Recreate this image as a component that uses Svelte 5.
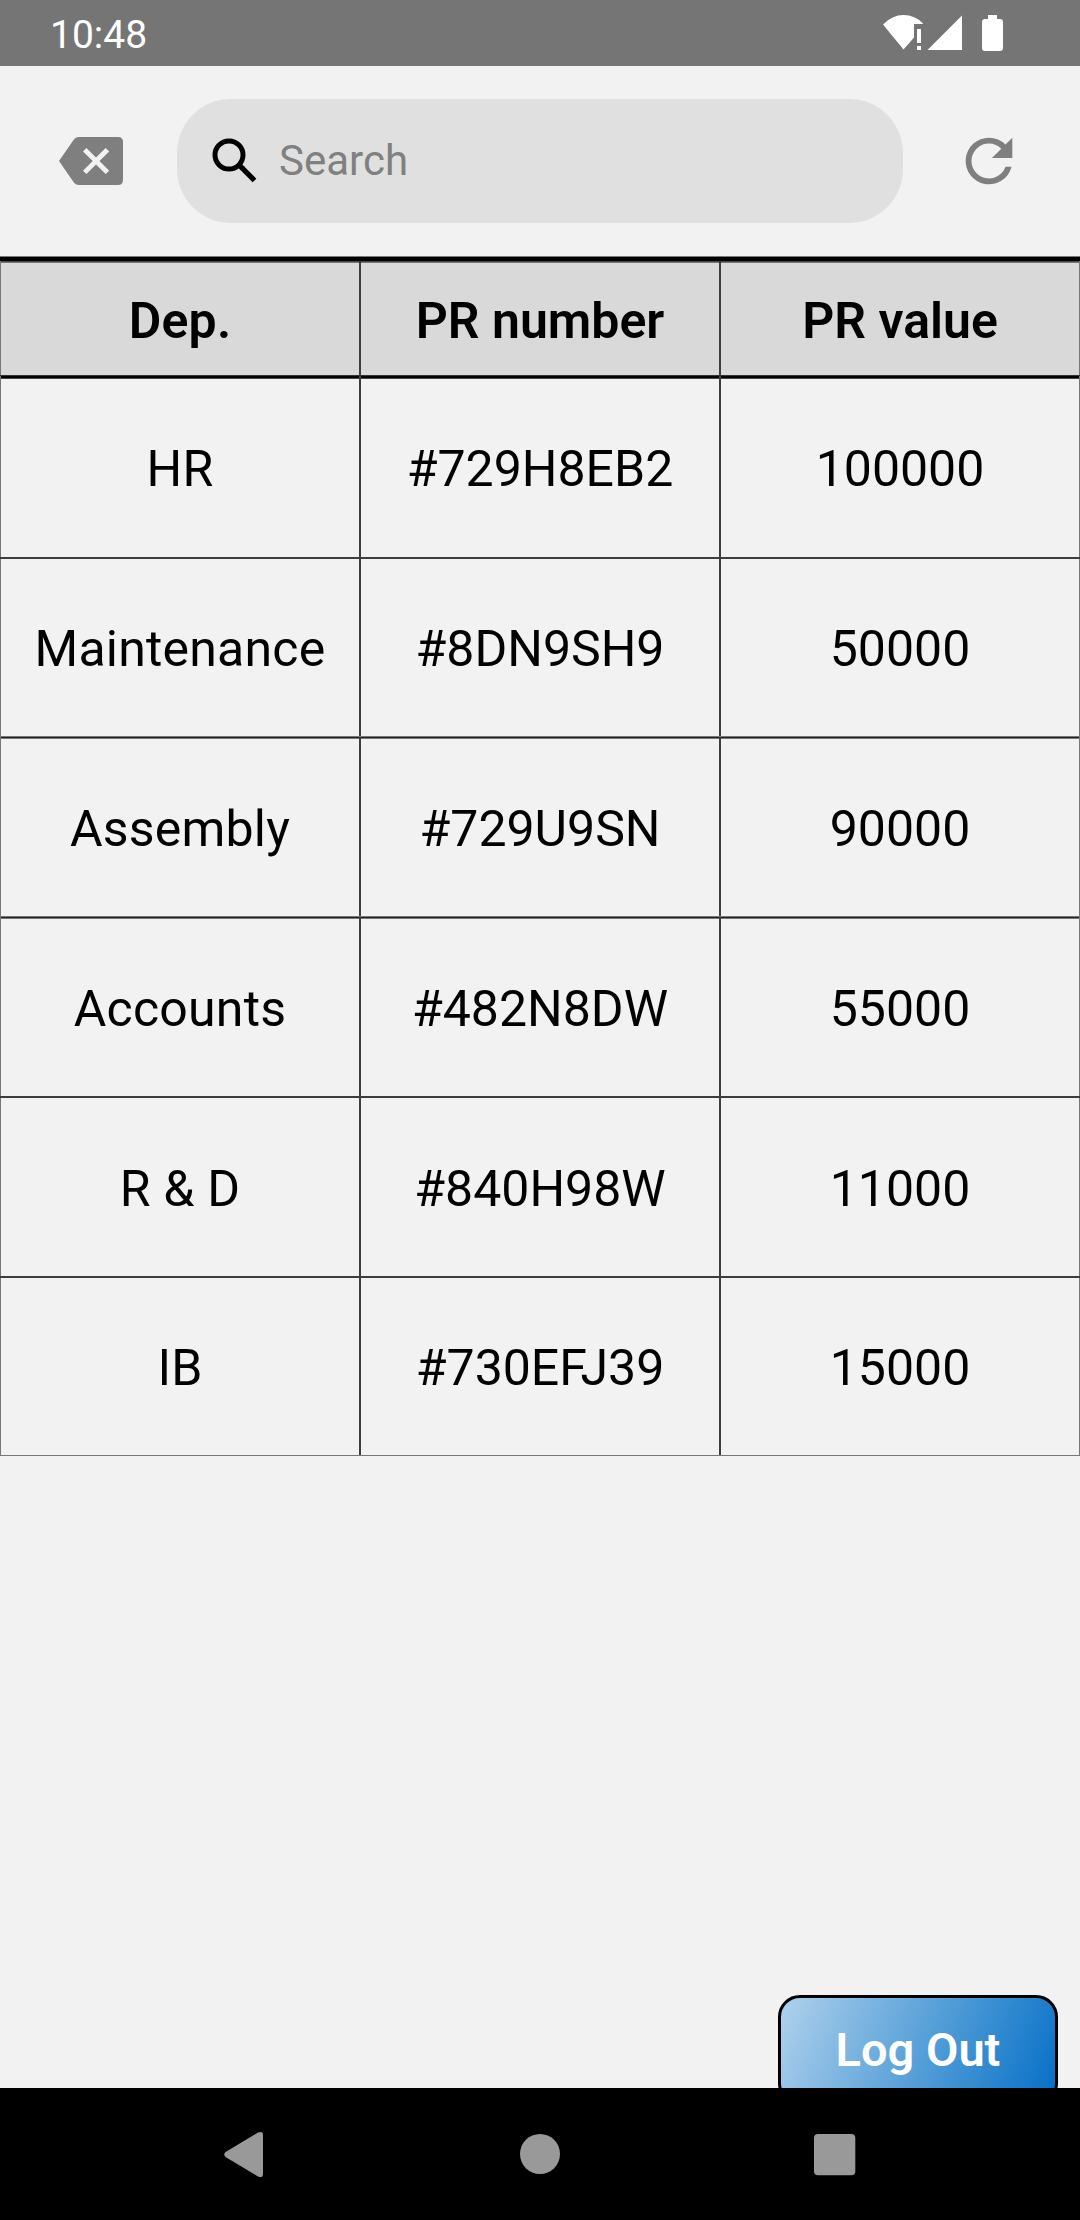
<script>
  const columns = ['Dep.', 'PR number', 'PR value'];
  const rows = [
    ['HR', '#729H8EB2', '100000'],
    ['Maintenance', '#8DN9SH9', '50000'],
    ['Assembly', '#729U9SN', '90000'],
    ['Accounts', '#482N8DW', '55000'],
    ['R & D', '#840H98W', '11000'],
    ['IB', '#730EFJ39', '15000'],
  ];
</script>

<div class="screen">
  <div class="status">
    <span class="time">10:48</span>
    <svg class="signals" width="124" height="40" viewBox="0 0 124 40">
      <path fill="#fff" d="M0 11.500Q9 2 20.500 2T40 10.500V11H31V24.500L20.500 36.500ZM34 16h4v14h-4ZM34 33h4v4h-4ZM44.500 37 79 2.500V37ZM105 2h9v4h3q3 0 3 3v26q0 3-3 3h-15q-3 0-3-3V9q0-3 3-3h3Z" />
    </svg>
  </div>

  <header>
    <svg class="clear" width="64" height="48" viewBox="0 0 64 48">
      <path fill="#7f7f7f" fill-rule="evenodd" d="M0 24 14.500 3Q16.500 0 20 0H59Q64 0 64 5V43Q64 48 59 48H20Q16.500 48 14.500 45ZM27.400 11 24 14.400 33.700 24 24 33.700 27.400 37.100 37 27.500 46.700 37.100 50.200 33.700 40.500 24 50.200 14.400 46.700 11 37 20.600Z" />
    </svg>
    <label class="search">
      <svg width="46" height="46" viewBox="0 0 46 46">
        <circle cx="17" cy="17" r="14" fill="none" stroke="#000" stroke-width="5" />
        <path stroke="#000" stroke-width="5.200" d="m28.200 28.200 14.300 14.300" />
        <path d="m27 29 2-2 4 2-3 4Z" />
      </svg>
      <input type="text" placeholder="Search" aria-label="Search" />
    </label>
    <svg class="refresh" width="70" height="70" viewBox="0 0 24 24">
      <path fill="#7f7f7f" d="M17.650 6.350A7.958 7.958 0 0 0 12 4a8 8 0 1 0 7.730 10h-2.080A6 6 0 1 1 12 6c1.660 0 3.140.69 4.220 1.780L13 11h7V4Z" />
    </svg>
  </header>

  <div class="table">
    <div class="row head">
      {#each columns as column}<div class="cell">{column}</div>{/each}
    </div>
    {#each rows as row, i}
      <div class="row" class:first={i === 0} class:soft={i === 2 || i === 3} class:short={i === 1 || i === 5}>
        {#each row as value}<div class="cell">{value}</div>{/each}
      </div>
    {/each}
  </div>

  <main>
    <button>Log Out</button>
  </main>

  <nav>
    <svg width="1080" height="132" viewBox="0 0 1080 132" fill="#999">
      <path d="M225.500 64 258 44.500Q263 42.500 263 47V86Q263 90.500 258 88.500L225.500 69Q223 66.500 225.500 64Z" />
      <circle cx="540" cy="66" r="20" />
      <rect x="814" y="46" width="41.300" height="41.300" rx="4" />
    </svg>
  </nav>
</div>

<style>
  :global(body) {
    margin: 0;
  }
  .screen {
    width: 1080px;
    height: 2220px;
    display: flex;
    flex-direction: column;
    background: #f2f2f2;
    color: #000;
    font-family: Roboto, sans-serif;
    overflow: hidden;
  }
  .status {
    height: 66px;
    flex: none;
    box-sizing: border-box;
    display: flex;
    justify-content: space-between;
    align-items: flex-start;
    padding: 11px 73px 0 50px;
    background: #757575;
    color: #fff;
  }
  .time {
    font-size: 39px;
    line-height: 48px;
  }
  .signals {
    margin-top: 2px;
  }
  header {
    height: 190px;
    flex: none;
    box-sizing: border-box;
    display: flex;
    align-items: center;
    padding: 0 56px 0 59px;
  }
  .search {
    width: 726px;
    height: 124px;
    box-sizing: border-box;
    margin-left: 54px;
    border-radius: 54px;
    background: #e0e0e0;
    display: flex;
    align-items: center;
    padding-left: 35px;
    gap: 21px;
  }
  input {
    border: 0;
    outline: 0;
    padding: 0;
    width: 560px;
    background: transparent;
    font: 42px/50px Roboto, sans-serif;
  }
  input::placeholder {
    color: #808080;
    opacity: 1;
  }
  .refresh {
    margin-left: auto;
    margin-bottom: 1px;
  }
  .table {
    flex: none;
    border-top: 1px solid #777;
    border-bottom: 1px solid #777;
  }
  .row {
    height: 180px;
    box-sizing: border-box;
    display: flex;
    border-top: 2px solid #3d3d3d;
  }
  .row.short {
    height: 179px;
  }
  .row.head {
    height: 118px;
    background: #d9d9d9;
    border-top: 4px solid #000;
    box-shadow: inset 0 1px #444, inset 0 2px #777;
    font-weight: 600;
  }
  .row.first {
    height: 182px;
    border-top: 1px solid #333;
    box-shadow: inset 0 2px #000, inset 0 3px #444;
  }
  .row.soft {
    border-top: 1px solid #777;
    box-shadow: inset 0 1px #222, inset 0 2px #777;
  }
  .cell {
    flex: 1 0 0;
    box-sizing: border-box;
    display: flex;
    align-items: center;
    justify-content: center;
    padding-top: 3px;
    font-size: 50px;
    border-right: 1px solid #3d3d3d;
    border-left: 1px solid #3d3d3d;
  }
  .head .cell,
  .first .cell,
  .soft .cell {
    padding-top: 5px;
  }
  .cell:first-child {
    border-left-color: #777;
    letter-spacing: 0.2px;
  }
  .cell:last-child {
    border-right-color: #777;
  }
  main {
    flex: 1 1 0;
    min-height: 0;
    overflow: hidden;
    display: flex;
    flex-direction: column;
    justify-content: flex-end;
    align-items: flex-end;
    padding-right: 22px;
  }
  button {
    flex: none;
    width: 280px;
    height: 110px;
    margin-bottom: -17px;
    padding: 0;
    border: 3px solid #000;
    border-radius: 22px;
    background: linear-gradient(112deg, #b0d2ed 0%, #9ac5e7 12%, #4495d4 62%, #056fc6 100%);
    color: #fff;
    font: 600 47px/56px Roboto, sans-serif;
  }
  nav {
    height: 132px;
    flex: none;
    background: #000;
  }
  nav svg {
    display: block;
  }
</style>
